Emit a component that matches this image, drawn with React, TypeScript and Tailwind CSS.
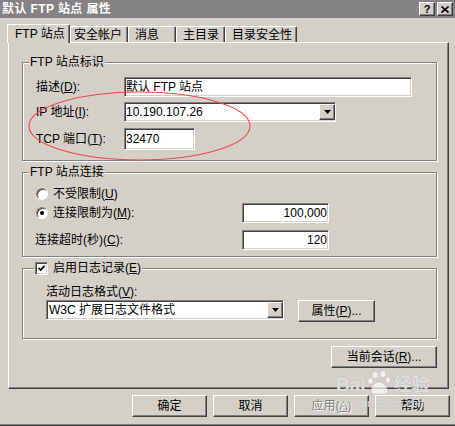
import React from "react";

const raised =
  "border border-t-white border-l-white border-r-[#404040] border-b-[#404040] shadow-[inset_-1px_-1px_0_#808080]";
const sunken =
  "border border-t-[#808080] border-l-[#808080] border-r-white border-b-white bg-white shadow-[inset_1px_1px_0_#404040,inset_-1px_-1px_0_#d4d0c8]";
const groupBox =
  "relative w-[415px] border border-[#808080] shadow-[1px_1px_0_#fff,inset_1px_1px_0_#fff]";

const Key = ({ k }: { k: string }) => (
  <>
    (<span className="underline underline-offset-1">{k}</span>)
  </>
);

const Arrow = () => (
  <div className={`flex h-[16px] w-[16px] shrink-0 items-center justify-center bg-[#d4d0c8] ${raised}`}>
    <svg width="7" height="4" viewBox="0 0 7 4">
      <path d="M0 0h7L3.5 4z" fill="#000" />
    </svg>
  </div>
);

const Radio = ({ checked }: { checked?: boolean }) => (
  <div className="flex h-[12px] w-[12px] shrink-0 items-center justify-center rounded-full border border-t-[#808080] border-l-[#808080] border-r-white border-b-white bg-white shadow-[inset_1px_1px_0_#404040]">
    {checked && <div className="h-[4px] w-[4px] rounded-full bg-black" />}
  </div>
);

const Button = ({ children, className = "" }: { children: React.ReactNode; className?: string }) => (
  <div className={`flex items-center justify-center bg-[#d4d0c8] ${raised} ${className}`}>{children}</div>
);

const Tab = ({ label, w, pl }: { label: string; w: string; pl: string }) => (
  <div
    className={`flex h-[16px] items-center rounded-t-[2px] border-t border-l border-r border-t-white border-l-white border-r-[#404040] shadow-[inset_-1px_0_0_#808080] ${w} ${pl}`}
  >
    {label}
  </div>
);

const FtpSiteProps: React.FC = () => {
  return (
    <div className="relative flex h-[426px] w-[455px] flex-col overflow-hidden bg-[#d4d0c8] font-['Liberation_Sans','Noto_Sans_CJK_SC',sans-serif] text-[12px] leading-[14px] text-black">
      {/* Title bar */}
      <div className="flex h-[18px] shrink-0 items-center justify-between bg-[#848284] pl-[2px] pr-[2px]">
        <span className="font-bold tracking-[0.4px] text-white">默认 FTP 站点 属性</span>
        <div className="flex gap-[2px]">
          <div className={`flex h-[14px] w-[16px] items-center justify-center bg-[#d4d0c8] ${raised}`}>
            <span className="text-[11px] font-bold leading-none">?</span>
          </div>
          <div className={`flex h-[14px] w-[16px] items-center justify-center bg-[#d4d0c8] ${raised}`}>
            <svg width="8" height="7" viewBox="0 0 8 7">
              <path d="M0.5 0.5L7.5 6.5M7.5 0.5L0.5 6.5" stroke="#000" strokeWidth="1.6" />
            </svg>
          </div>
        </div>
      </div>

      {/* Tabs */}
      <div className="ml-[7px] mt-[6px] flex h-[18px] items-end">
        <div className="relative z-10 -mb-px flex h-[19px] w-[63px] items-center rounded-t-[2px] border-t border-l border-r border-t-white border-l-white border-r-[#404040] bg-[#d4d0c8] pl-[7px] shadow-[inset_-1px_0_0_#808080]">
          FTP 站点
        </div>
        <Tab label="安全帐户" w="w-[58px]" pl="pl-[3px]" />
        <Tab label="消息" w="w-[48px]" pl="pl-[6px]" />
        <Tab label="主目录" w="w-[49px]" pl="pl-[6px]" />
        <Tab label="目录安全性" w="w-[72px]" pl="pl-[6px]" />
      </div>

      {/* Tab panel */}
      <div className="ml-[8px] flex h-[347px] w-[441px] flex-col border-t border-l border-r border-b border-t-white border-l-white border-r-[#404040] border-b-[#404040] pl-[13px] pt-[19px] shadow-[inset_-1px_-1px_0_#808080]">
        <div className="flex w-[415px] flex-col">
          {/* Identification */}
          <div className={`${groupBox} h-[99px] pl-[13px] pt-[14px]`}>
            <span className="absolute -top-[8px] left-[6px] bg-[#d4d0c8] px-[1px]">FTP 站点标识</span>
            <div className="flex h-[20px] items-center">
              <span className="w-[88px]">
                描述<Key k="D" />:
              </span>
              <div className={`flex h-[20px] w-[288px] items-center px-[1px] ${sunken}`}>默认 FTP 站点</div>
            </div>
            <div className="mt-[5px] flex h-[20px] items-center">
              <span className="w-[88px]">
                IP 地址<Key k="I" />:
              </span>
              <div className={`flex h-[20px] w-[212px] items-center justify-between pl-[1px] ${sunken}`}>
                <span>10.190.107.26</span>
                <Arrow />
              </div>
            </div>
            <div className="mt-[6px] flex h-[22px] items-center">
              <span className="w-[88px]">
                TCP 端口<Key k="T" />:
              </span>
              <div className={`flex h-[22px] w-[71px] items-center px-[1px] ${sunken}`}>32470</div>
            </div>
          </div>

          {/* Connections */}
          <div className={`${groupBox} mt-[11px] h-[85px] pl-[13px] pt-[14px]`}>
            <span className="absolute -top-[8px] left-[6px] bg-[#d4d0c8] px-[1px]">FTP 站点连接</span>
            <div className="flex h-[14px] items-center gap-[5px]">
              <Radio />
              <span>
                不受限制<Key k="U" />
              </span>
            </div>
            <div className="mt-[2px] flex h-[20px] items-center">
              <div className="flex w-[206px] items-center gap-[5px]">
                <Radio checked />
                <span>
                  连接限制为<Key k="M" />:
                </span>
              </div>
              <div className={`flex h-[20px] w-[87px] items-center justify-end pr-[1px] ${sunken}`}>100,000</div>
            </div>
            <div className="mt-[7px] flex h-[20px] items-center">
              <span className="-ml-px w-[207px]">
                连接超时(秒)<Key k="C" />:
              </span>
              <div className={`flex h-[20px] w-[87px] items-center justify-end pr-[1px] ${sunken}`}>120</div>
            </div>
          </div>

          {/* Logging */}
          <div className={`${groupBox} mt-[11px] h-[71px] pl-[23px] pt-[16px]`}>
            <div className="absolute -top-[8px] left-[11px] flex items-center gap-[5px] bg-[#d4d0c8] px-[1px]">
              <div className={`flex h-[13px] w-[13px] items-center justify-center ${sunken}`}>
                <svg width="7" height="7" viewBox="0 0 7 7">
                  <path d="M0.5 2.8L2.6 5L6.6 0.8" fill="none" stroke="#000" strokeWidth="1.8" />
                </svg>
              </div>
              <span>
                启用日志记录<Key k="E" />
              </span>
            </div>
            <div className="h-[14px]">
              活动日志格式<Key k="V" />:
            </div>
            <div className="mt-[1px] flex items-start gap-[14px]">
              <div className={`flex h-[20px] w-[238px] items-center justify-between pl-[2px] ${sunken}`}>
                <span>W3C 扩展日志文件格式</span>
                <Arrow />
              </div>
              <Button className="h-[22px] w-[77px]">
                属性<Key k="P" />...
              </Button>
            </div>
          </div>

          <Button className="mt-[7px] h-[22px] w-[106px] self-end">
            当前会话<Key k="R" />...
          </Button>
        </div>
      </div>

      {/* Dialog buttons */}
      <div className="mt-[6px] flex justify-end gap-[6px] pr-[5px]">
        <Button className="h-[22px] w-[75px]">确定</Button>
        <Button className="h-[22px] w-[75px]">取消</Button>
        <Button className="h-[22px] w-[75px] text-[#808080] [text-shadow:1px_1px_0_#fff]">
          应用<Key k="A" />
        </Button>
        <Button className="h-[22px] w-[75px]">帮助</Button>
      </div>

      {/* window frame bottom */}
      <div className="mt-auto h-[2px] border-t border-b border-t-[#808080] border-b-[#404040]" />

      {/* red annotation ellipse */}
      <svg className="pointer-events-none absolute left-0 top-0" width="455" height="426">
        <ellipse cx="139.5" cy="126" rx="110.5" ry="34" fill="none" stroke="#f04a4a" strokeWidth="1.1" />
      </svg>

      {/* watermark */}
      <div className="pointer-events-none absolute left-[336px] top-[369px] flex flex-col items-center text-white/60 [text-shadow:0_0_1px_#aaa]">
        <div className="flex items-end gap-[1px]">
          <span className="text-[19px] font-bold leading-[20px]">Bai</span>
          <svg width="26" height="26" viewBox="0 0 26 26" className="opacity-70">
            <g fill="#fff" stroke="#bbb" strokeWidth="0.6">
              <ellipse cx="8" cy="6" rx="3" ry="3.6" />
              <ellipse cx="16" cy="5" rx="3" ry="3.6" />
              <ellipse cx="3.5" cy="12" rx="2.6" ry="3.2" />
              <ellipse cx="21" cy="11" rx="2.6" ry="3.2" />
              <path d="M4 22c0-5 4-9 8-9s8 4 9 9c0 3-4 3-9 3s-8 0-8-3z" />
            </g>
          </svg>
          <span className="text-[18px] font-bold leading-[20px]">经验</span>
        </div>
        <span className="mt-[2px] text-[11px] leading-[12px]">jingyan.baidu.com</span>
      </div>
    </div>
  );
};

export default function App() {
  return <FtpSiteProps />;
}
